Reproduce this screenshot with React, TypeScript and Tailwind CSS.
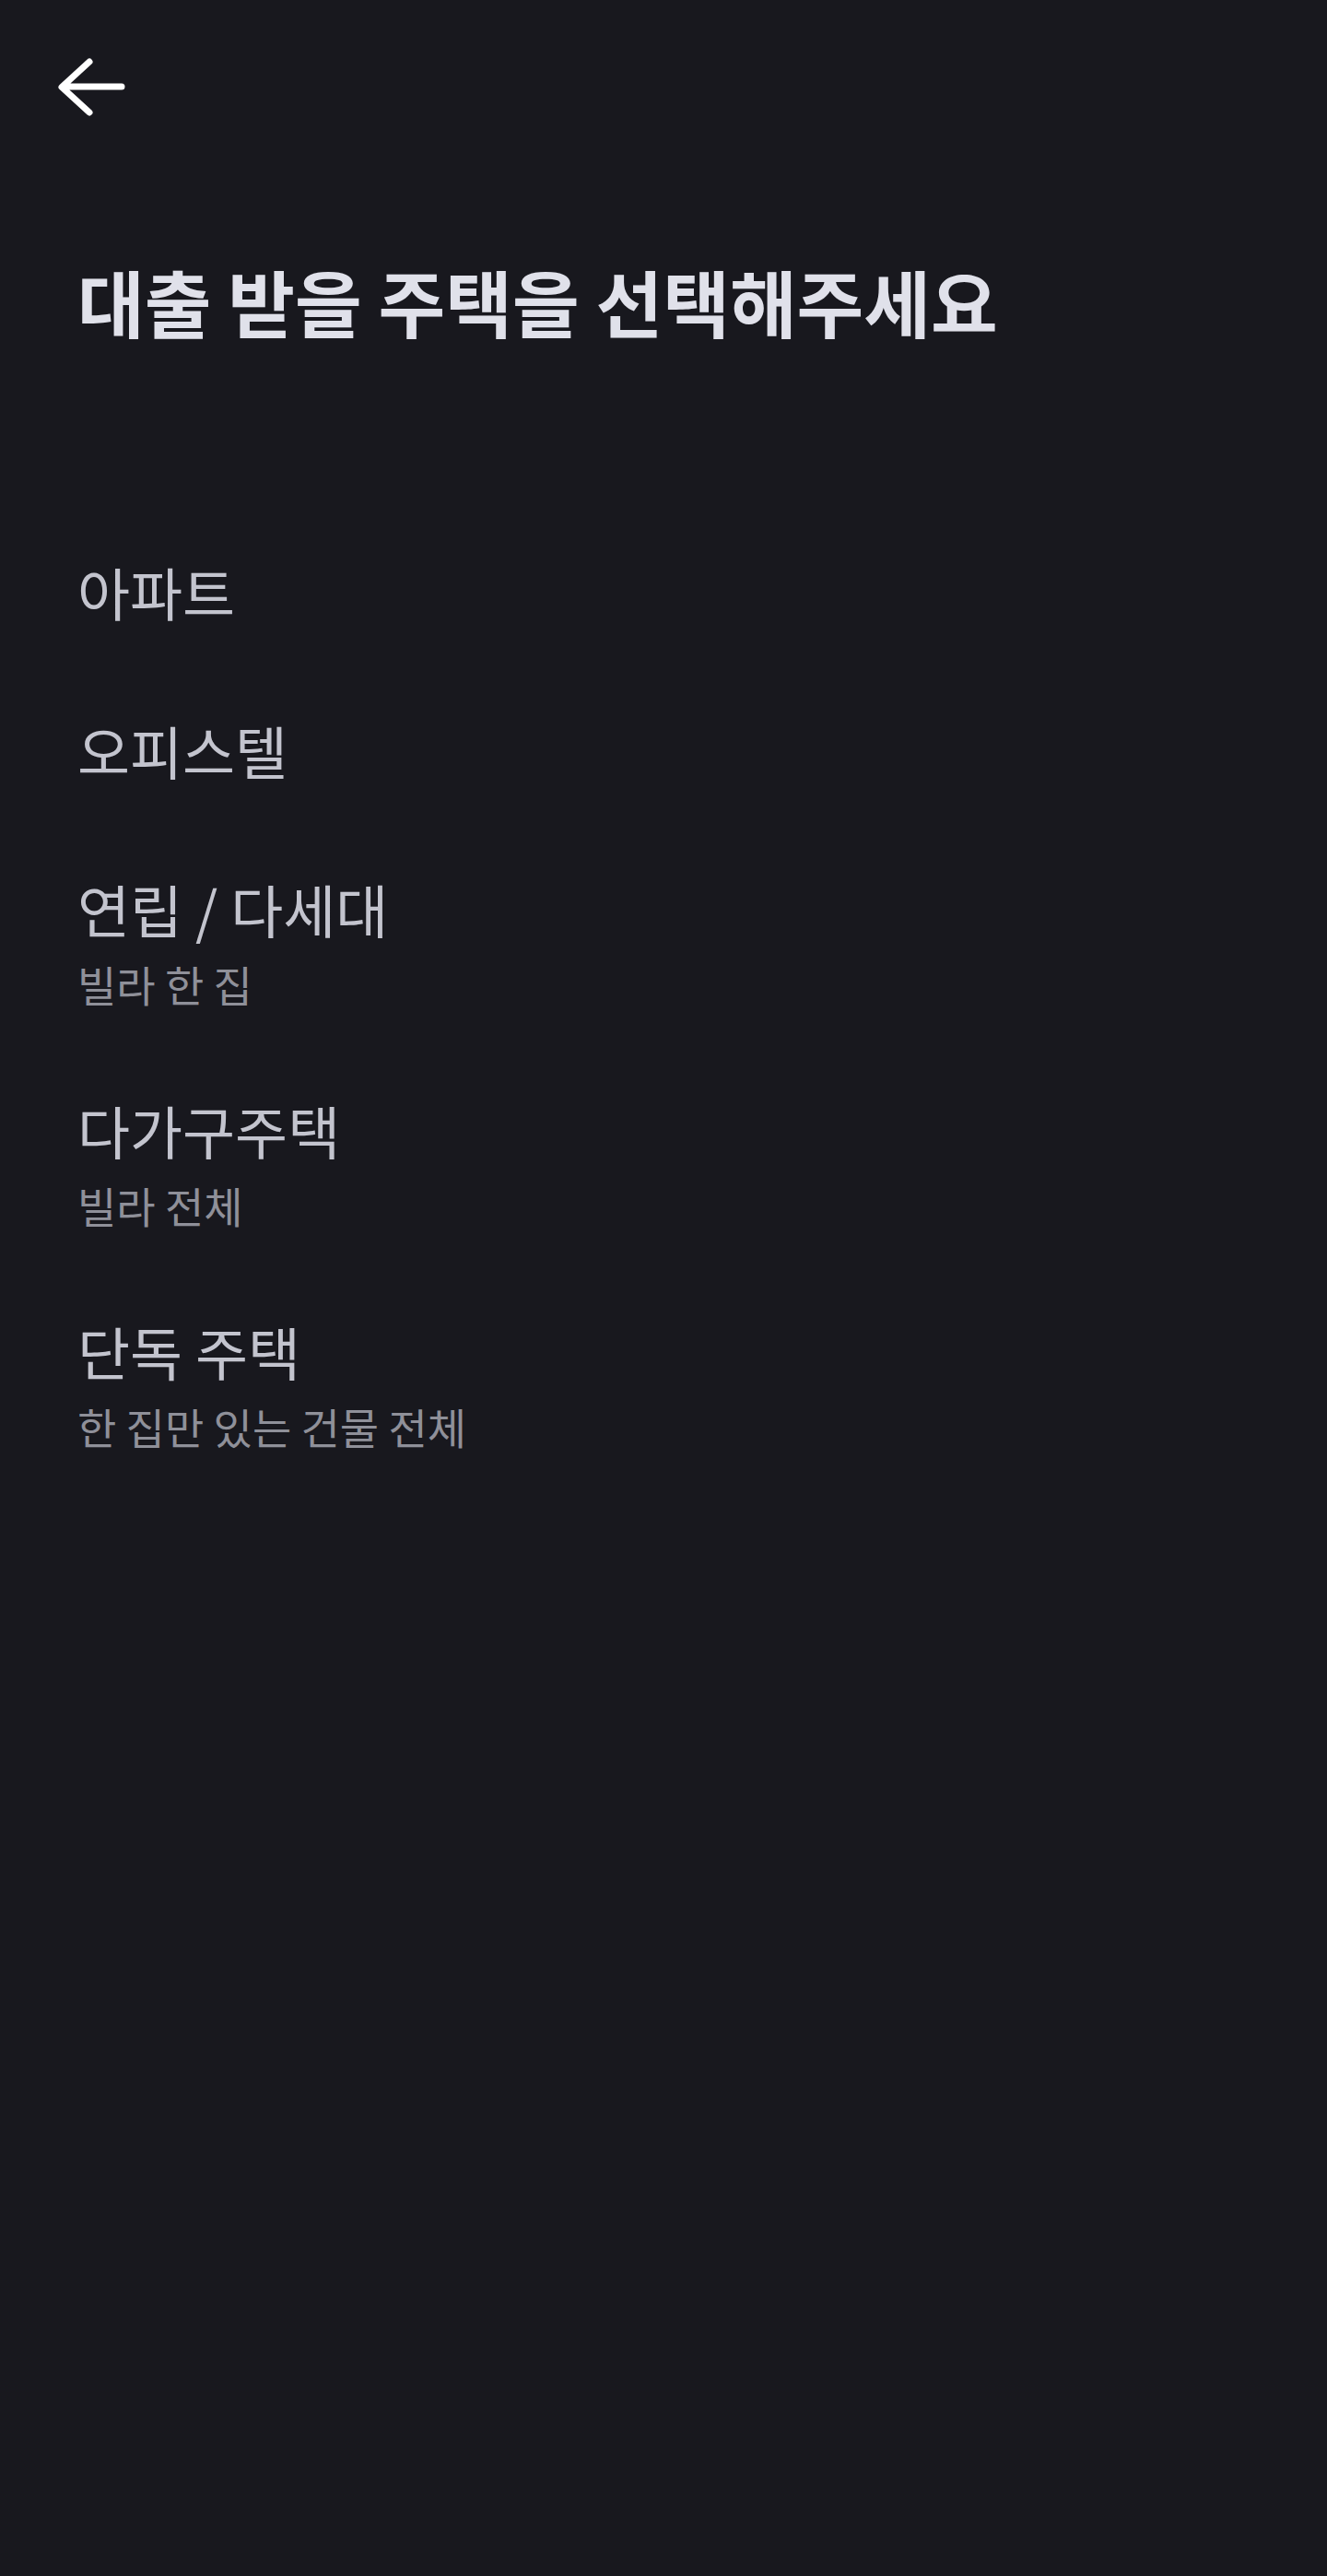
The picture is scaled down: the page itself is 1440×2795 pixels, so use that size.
const font = { fontFamily: '"Noto Sans CJK KR", "Noto Sans", sans-serif' };

type HouseType = {
  label: string;
  desc?: string;
};

const houseTypes: HouseType[] = [
  { label: "아파트" },
  { label: "오피스텔" },
  { label: "연립 / 다세대", desc: "빌라 한 집" },
  { label: "다가구주택", desc: "빌라 전체" },
  { label: "단독 주택", desc: "한 집만 있는 건물 전체" },
];

// 뒤로가기 화살표
const BackArrow = () => (
  <svg width="80" height="70" viewBox="0 0 80 70" fill="none" aria-hidden="true">
    <path
      d="M72 34H8M37 7 7 34.5 37 62"
      stroke="#ffffff"
      strokeWidth="7"
      strokeLinecap="round"
      strokeLinejoin="round"
    />
  </svg>
);

const HouseRow = ({ item }: { item: HouseType }) => (
  <button className="flex w-full flex-col items-start py-[48px] px-[84px] text-left">
    <span className="text-[62px] leading-[76px] text-[#c3c4ce]">{item.label}</span>
    {item.desc && (
      <span className="mt-[18px] text-[46px] leading-[50px] text-[#8f9099]">{item.desc}</span>
    )}
  </button>
);

export default function App() {
  return (
    <div className="min-h-[2795px] w-full bg-[#18181e]" style={font}>
      <div className="pl-[60px] pt-[60px]">
        <BackArrow />
      </div>

      <h1 className="mt-[150px] px-[84px] text-[79px] font-bold leading-[94px] text-[#e0e1ea]">
        대출 받을 주택을 선택해주세요
      </h1>

      <div className="mt-[182px] flex flex-col">
        {houseTypes.map((item) => (
          <HouseRow key={item.label} item={item} />
        ))}
      </div>
    </div>
  );
}
